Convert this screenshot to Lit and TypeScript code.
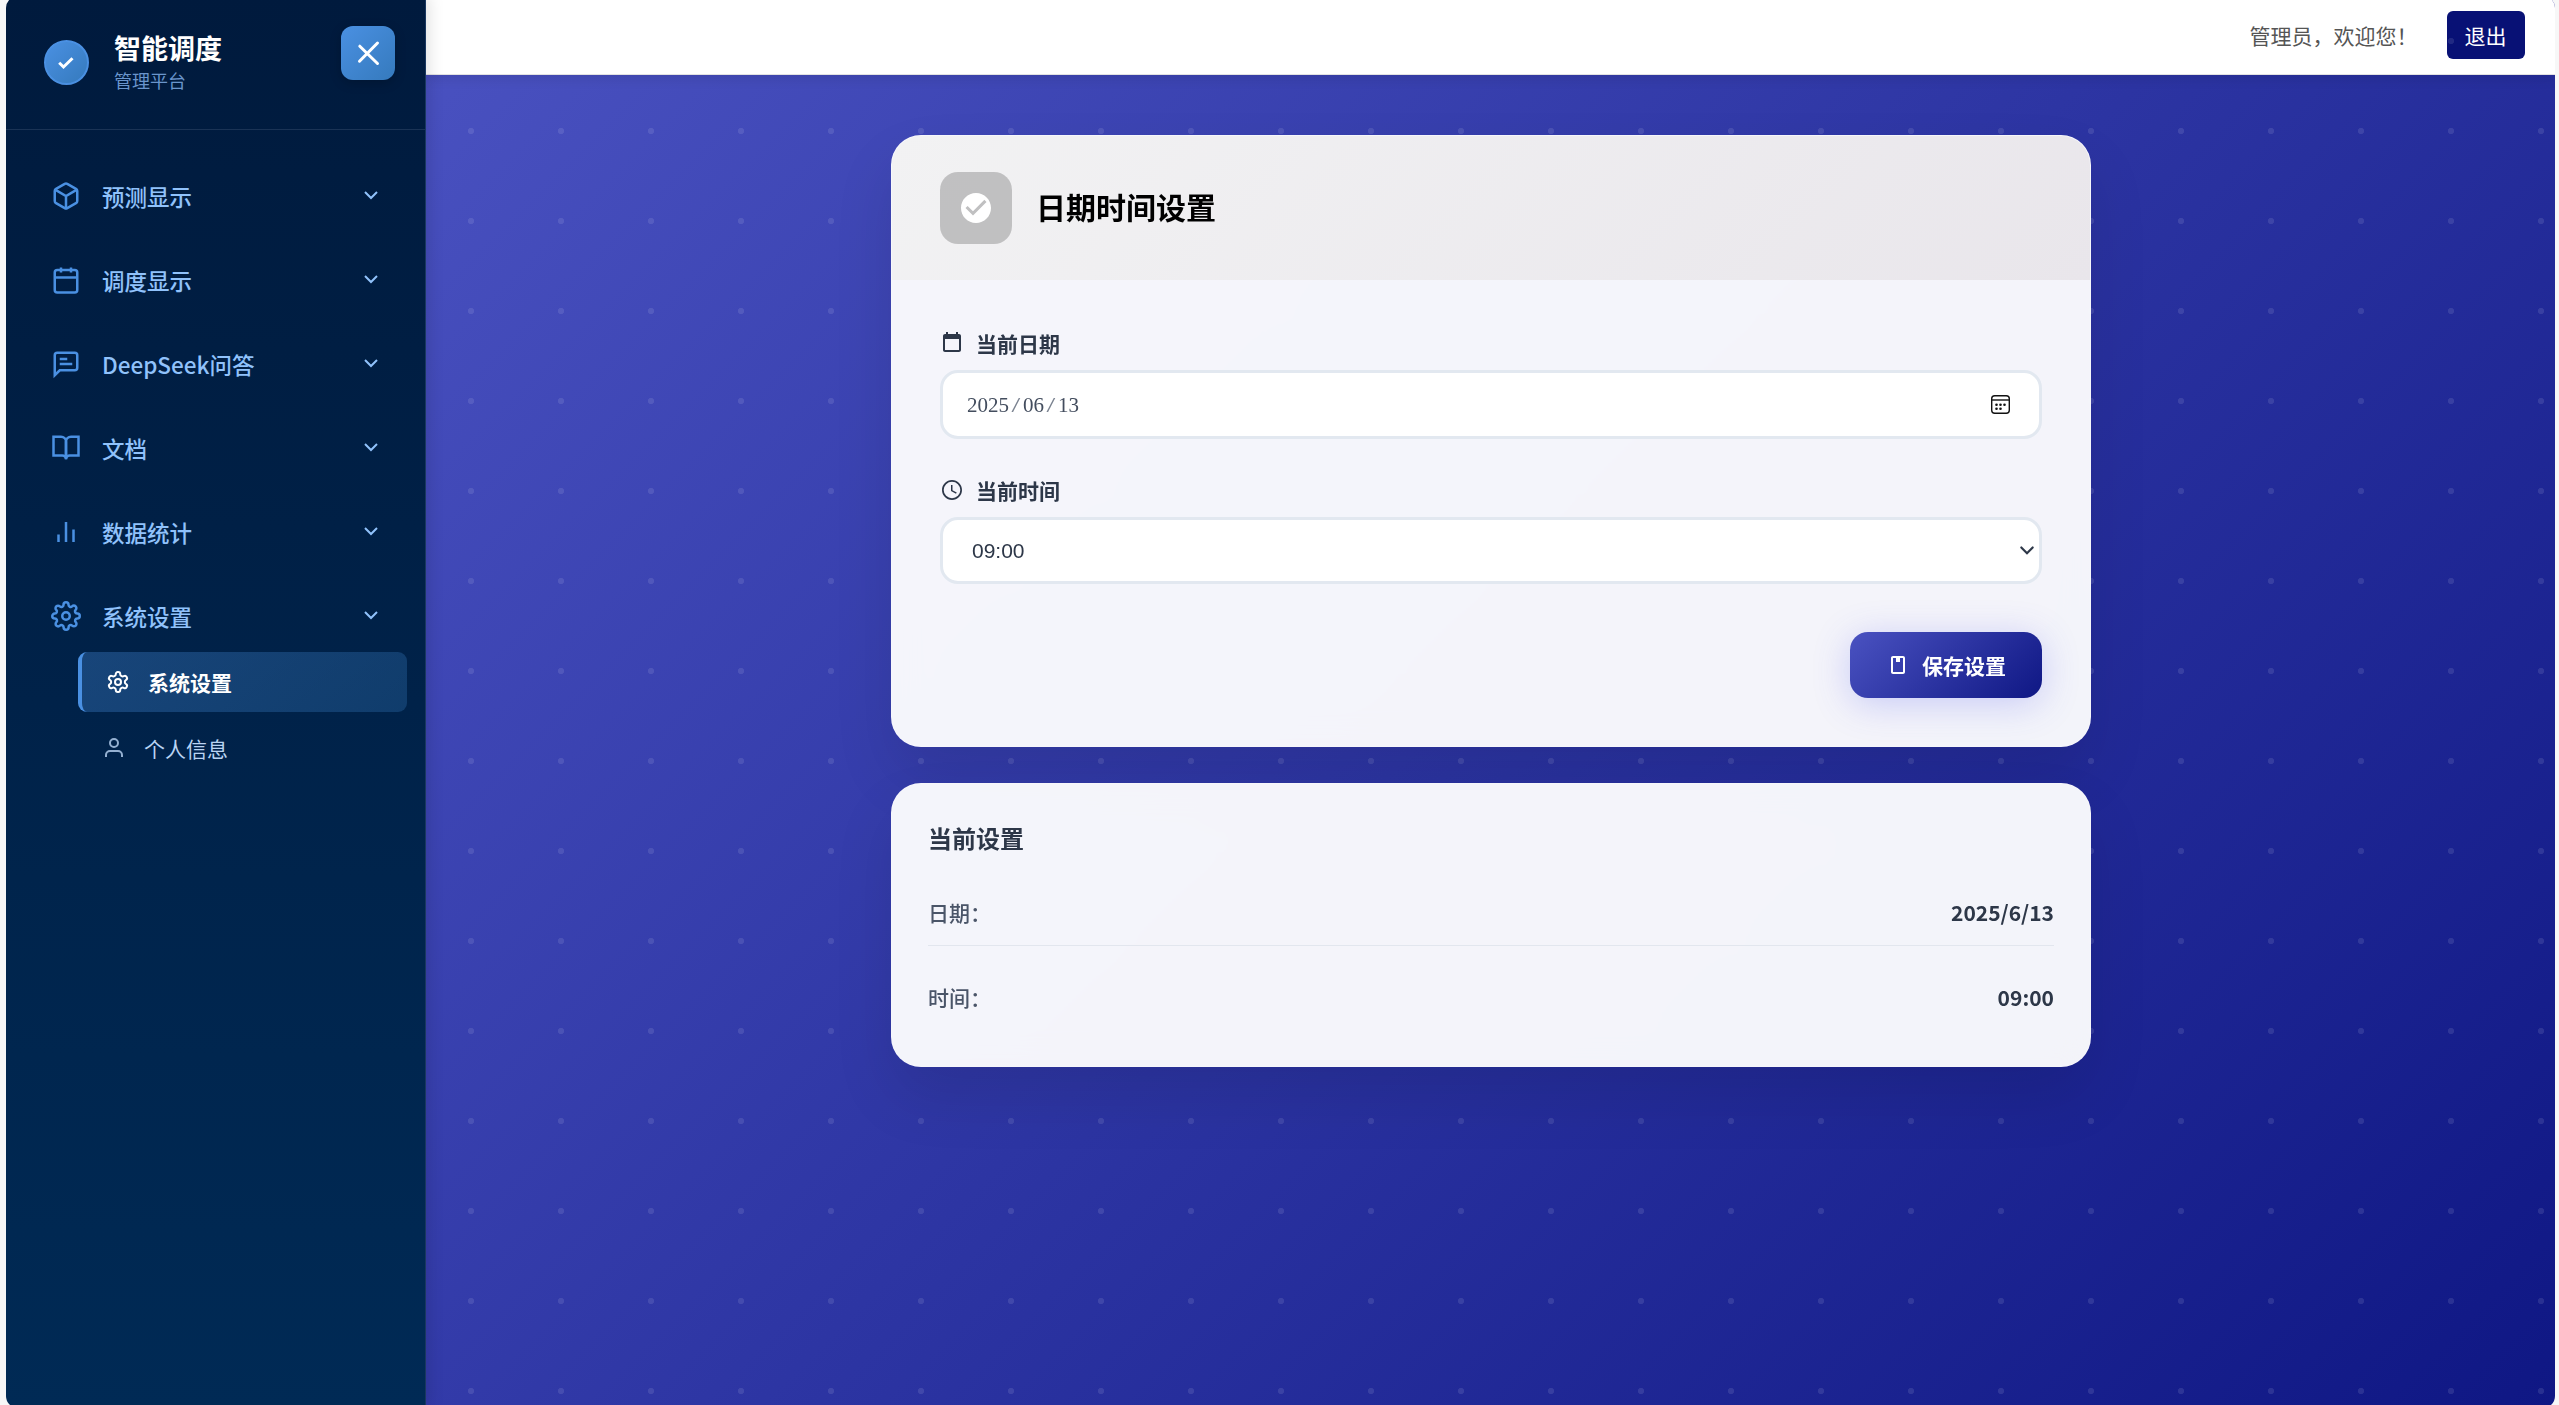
import { LitElement, html, css, svg } from "lit";
import { customElement } from "lit/decorators.js";

const icons = {
  box: svg`<path d="M21 16V8a2 2 0 0 0-1-1.73l-7-4a2 2 0 0 0-2 0l-7 4A2 2 0 0 0 3 8v8a2 2 0 0 0 1 1.73l7 4a2 2 0 0 0 2 0l7-4A2 2 0 0 0 21 16z"/><path d="M3.27 6.96L12 12.01l8.73-5.05M12 22.08V12"/>`,
  calendar: svg`<rect x="3" y="4" width="18" height="18" rx="2"/><path d="M16 2v4M8 2v4M3 10h18"/>`,
  chat: svg`<path d="M21 15a2 2 0 0 1-2 2H7l-4 4V5a2 2 0 0 1 2-2h14a2 2 0 0 1 2 2z"/><path d="M7 8h6M7 12h10"/>`,
  book: svg`<path d="M2 3h6a4 4 0 0 1 4 4v14a3 3 0 0 0-3-3H2z"/><path d="M22 3h-6a4 4 0 0 0-4 4v14a3 3 0 0 1 3-3h7z"/>`,
  chart: svg`<path d="M18 20V10M12 20V4M6 20v-6"/>`,
  settings: svg`<circle cx="12" cy="12" r="3"/><path d="M19.4 15a1.65 1.65 0 0 0 .33 1.82l.06.06a2 2 0 0 1 0 2.83 2 2 0 0 1-2.83 0l-.06-.06a1.65 1.65 0 0 0-1.82-.33 1.65 1.65 0 0 0-1 1.51V21a2 2 0 0 1-2 2 2 2 0 0 1-2-2v-.09A1.65 1.65 0 0 0 9 19.4a1.65 1.65 0 0 0-1.82.33l-.06.06a2 2 0 0 1-2.83 0 2 2 0 0 1 0-2.83l.06-.06a1.65 1.65 0 0 0 .33-1.82 1.65 1.65 0 0 0-1.51-1H3a2 2 0 0 1-2-2 2 2 0 0 1 2-2h.09A1.65 1.65 0 0 0 4.6 9a1.65 1.65 0 0 0-.33-1.82l-.06-.06a2 2 0 0 1 0-2.83 2 2 0 0 1 2.83 0l.06.06a1.65 1.65 0 0 0 1.82.33H9a1.65 1.65 0 0 0 1-1.51V3a2 2 0 0 1 2-2 2 2 0 0 1 2 2v.09a1.65 1.65 0 0 0 1 1.51 1.65 1.65 0 0 0 1.82-.33l.06-.06a2 2 0 0 1 2.83 0 2 2 0 0 1 0 2.83l-.06.06a1.65 1.65 0 0 0-.33 1.82V9a1.65 1.65 0 0 0 1.51 1H21a2 2 0 0 1 2 2 2 2 0 0 1-2 2h-.09a1.65 1.65 0 0 0-1.51 1z"/>`,
  cog: svg`<path d="M12.22 2h-.44a2 2 0 0 0-2 2v.18a2 2 0 0 1-1 1.73l-.43.25a2 2 0 0 1-2 0l-.15-.08a2 2 0 0 0-2.73.73l-.22.38a2 2 0 0 0 .73 2.73l.15.1a2 2 0 0 1 1 1.72v.51a2 2 0 0 1-1 1.74l-.15.09a2 2 0 0 0-.73 2.73l.22.38a2 2 0 0 0 2.73.73l.15-.08a2 2 0 0 1 2 0l.43.25a2 2 0 0 1 1 1.73V20a2 2 0 0 0 2 2h.44a2 2 0 0 0 2-2v-.18a2 2 0 0 1 1-1.73l.43-.25a2 2 0 0 1 2 0l.15.08a2 2 0 0 0 2.73-.73l.22-.39a2 2 0 0 0-.73-2.73l-.15-.08a2 2 0 0 1-1-1.74v-.5a2 2 0 0 1 1-1.74l.15-.09a2 2 0 0 0 .73-2.73l-.22-.38a2 2 0 0 0-2.73-.73l-.15.08a2 2 0 0 1-2 0l-.43-.25a2 2 0 0 1-1-1.73V4a2 2 0 0 0-2-2z"/><circle cx="12" cy="12" r="3"/>`,
  user: svg`<path d="M20 21v-2a4 4 0 0 0-4-4H8a4 4 0 0 0-4 4v2"/><circle cx="12" cy="7" r="4"/>`,
};

const menu = [
  { icon: icons.box, label: "预测显示" },
  { icon: icons.calendar, label: "调度显示" },
  { icon: icons.chat, label: "DeepSeek问答" },
  { icon: icons.book, label: "文档" },
  { icon: icons.chart, label: "数据统计" },
  { icon: icons.settings, label: "系统设置" },
];

@customElement("side-bar")
class SideBar extends LitElement {
  static styles = css`
    :host {
      display: flex;
      flex-direction: column;
      box-sizing: border-box;
      width: 420px;
      flex: none;
      border-right: 1px solid #1a3860;
      background: linear-gradient(180deg, #001a3d 0%, #002a55 100%);
      box-shadow: 3px 0 15px rgba(0, 0, 0, 0.12);
      position: relative;
      z-index: 3;
    }
    svg {
      display: block;
      flex: none;
      fill: none;
      stroke: currentColor;
      stroke-width: 2;
    }
    .head {
      display: flex;
      align-items: center;
      box-sizing: border-box;
      height: 134px;
      padding: 0 30px 0 37.5px;
      border-bottom: 1px solid #1a3355;
    }
    .logo {
      display: grid;
      place-items: center;
      box-sizing: border-box;
      width: 45px;
      height: 45px;
      border: 2px solid #4a90e2;
      border-radius: 50%;
      background: linear-gradient(135deg, #4a90e2, #357abd);
      color: #fff;
    }
    .logo svg,
    .close svg {
      stroke-width: 3;
    }
    .name {
      margin-left: 25.5px;
      flex: 1;
    }
    .name h1 {
      margin: -1px 0 0;
      font-size: 27px;
      line-height: 36px;
      font-weight: 700;
      color: #fff;
    }
    .name p {
      margin: 0;
      font-size: 18px;
      line-height: 28px;
      color: #6a95cc;
    }
    .close {
      display: grid;
      place-items: center;
      align-self: flex-start;
      margin-top: 30px;
      width: 54px;
      height: 54px;
      border-radius: 12px;
      background: linear-gradient(135deg, #4a90e2, #357abd);
      box-shadow: 0 3px 12px rgba(0, 0, 0, 0.2);
      color: #fff;
    }
    nav {
      padding: 30px 18px 0;
      display: flex;
      flex-direction: column;
      gap: 12px;
    }
    .item {
      display: flex;
      align-items: center;
      height: 72px;
      padding: 0 24px 0 27px;
      color: #90c2fb;
      font-size: 22.5px;
      font-weight: 500;
    }
    .item .ic {
      color: #4a90e2;
    }
    .item span {
      flex: 1;
      margin-left: 21px;
      padding-bottom: 1px;
    }
    .item .chev {
      margin-bottom: 2px;
    }
    .sub {
      display: flex;
      flex-direction: column;
      gap: 6px;
      padding: 0 18px 0 72px;
    }
    .entry {
      display: flex;
      align-items: center;
      gap: 18px;
      box-sizing: border-box;
      height: 60px;
      padding-left: 24px;
      border-radius: 9px;
      font-size: 21px;
      color: #b9d4f3;
    }
    .entry svg {
      opacity: 0.8;
    }
    .active {
      border-left: 4px solid #4a90e2;
      background: linear-gradient(135deg, rgba(74, 144, 226, 0.32), rgba(53, 122, 189, 0.3));
      color: #fff;
      font-weight: 700;
    }
    .active svg {
      opacity: 1;
    }
  `;
  render() {
    return html`
      <div class="head">
        <div class="logo">
          <svg width="24" height="24" viewBox="0 0 24 24"><path d="M5.2 11.8l4.3 4.2 9-8.8"/></svg>
        </div>
        <div class="name">
          <h1>智能调度</h1>
          <p>管理平台</p>
        </div>
        <div class="close">
          <svg width="54" height="54" viewBox="0 0 54 54" stroke-linecap="round"><path d="M18.8 20.2L36.500 37.500M36.500 17L18.500 35.200"/></svg>
        </div>
      </div>
      <nav>
        ${menu.map(
          (m) => html`<div class="item">
            <svg class="ic" width="30" height="30" viewBox="0 0 24 24">${m.icon}</svg>
            <span>${m.label}</span>
            <svg class="chev" width="24" height="24" viewBox="0 0 24 24"><path d="M6 9l6 6 6-6"/></svg>
          </div>`,
        )}
      </nav>
      <div class="sub">
        <div class="entry active">
          <svg width="24" height="24" viewBox="0 0 24 24">${icons.cog}</svg>
          <span>系统设置</span>
        </div>
        <div class="entry">
          <svg width="24" height="24" viewBox="0 0 24 24">${icons.user}</svg>
          <span>个人信息</span>
        </div>
      </div>
    `;
  }
}

@customElement("settings-cards")
class SettingsCards extends LitElement {
  static styles = css`
    :host {
      display: flex;
      flex-direction: column;
      gap: 36px;
      width: 1200px;
      margin-left: 1.5px;
      position: relative;
      z-index: 2;
    }
    svg {
      display: block;
      flex: none;
      fill: currentColor;
    }
    .card {
      box-sizing: border-box;
      border: 1px solid rgba(255, 255, 255, 0.2);
      border-radius: 30px;
      background: rgba(255, 255, 255, 0.95);
      backdrop-filter: blur(15px);
      box-shadow: 0 30px 60px rgba(0, 0, 0, 0.1);
      overflow: hidden;
    }
    .top {
      display: flex;
      align-items: center;
      gap: 24px;
      height: 72px;
      padding: 36px 48px;
      background: linear-gradient(135deg, #f2f2f3, #e9e6eb);
    }
    .badge {
      display: grid;
      place-items: center;
      width: 72px;
      height: 72px;
      border-radius: 18px;
      background: rgba(0, 0, 0, 0.2);
      color: #fff;
    }
    h2 {
      margin: 0 0 5px;
      font-size: 30px;
      font-weight: 700;
      color: #000;
    }
    .body {
      display: flex;
      flex-direction: column;
      padding: 48px;
      color: #2d3748;
    }
    .label {
      display: flex;
      align-items: center;
      gap: 12px;
      height: 30px;
      margin-bottom: 12px;
      font-size: 21px;
      font-weight: 700;
    }
    .field {
      display: flex;
      align-items: center;
      justify-content: space-between;
      box-sizing: border-box;
      border: 3px solid #e2e8f0;
      border-radius: 18px;
      background: #fff;
      font-size: 21px;
    }
    .date {
      height: 69px;
      padding: 0 26px 0 24px;
      margin-bottom: 36px;
      font-family: "Liberation Serif", "Noto Sans CJK SC", serif;
    }
    .parts {
      display: flex;
      padding-top: 1px;
      color: #434d5e;
    }
    .sep {
      width: 14px;
      text-align: center;
      transform: scaleX(1.5);
      color: #7a8290;
    }
    .date svg {
      color: #111;
    }
    .time {
      height: 67px;
      padding: 0 3px 0 29px;
      margin-bottom: 48px;
      font-family: "Liberation Sans", "Noto Sans CJK SC", sans-serif;
    }
    .save {
      align-self: flex-end;
      display: flex;
      align-items: center;
      gap: 12px;
      height: 66px;
      padding: 0 36px;
      border-radius: 18px;
      background: linear-gradient(135deg, #4a52c1, #0f1784);
      box-shadow: 0 6px 36px rgba(76, 81, 240, 0.25);
      color: #fff;
      font-size: 21px;
      font-weight: 700;
    }
    .current {
      padding: 36px;
    }
    h3 {
      margin: 0 0 24px;
      font-size: 24px;
      line-height: 35px;
      font-weight: 700;
      color: #2d3748;
    }
    .row {
      display: flex;
      justify-content: space-between;
      padding: 18px 0;
      font-size: 21px;
      line-height: 30px;
      font-weight: 500;
      color: #4a5568;
    }
    .row + .row {
      margin-top: 18px;
    }
    .ruled {
      border-bottom: 1px solid #e2e6ee;
    }
    .row b {
      font-weight: 700;
      color: #2d3748;
    }
  `;
  render() {
    return html`
      <section class="card">
        <div class="top">
          <div class="badge">
            <svg width="36" height="36" viewBox="0 0 24 24"><path d="M12 2C6.48 2 2 6.48 2 12s4.48 10 10 10 10-4.48 10-10S17.52 2 12 2zm-2 15l-5-5 1.41-1.41L10 14.17l7.59-7.59L19 8l-9 9z"/></svg>
          </div>
          <h2>日期时间设置</h2>
        </div>
        <div class="body">
          <div class="label">
            <svg width="24" height="24" viewBox="0 0 24 24"><path d="M19 3h-1V1h-2v2H8V1H6v2H5c-1.11 0-1.99.9-1.99 2L3 19c0 1.1.89 2 2 2h14c1.1 0 2-.9 2-2V5c0-1.1-.9-2-2-2zm0 16H5V8h14v11z"/></svg>
            <span>当前日期</span>
          </div>
          <div class="field date">
            <div class="parts"><span>2025</span><span class="sep">/</span><span>06</span><span class="sep">/</span><span>13</span></div>
            <svg width="24" height="24" viewBox="0 0 24 24">
              <rect x="2.7" y="2.7" width="17.6" height="17.6" rx="3" fill="none" stroke="currentColor" stroke-width="1.4"/>
              <path d="M3 7h17" stroke="currentColor" stroke-width="1.4"/>
              <circle cx="7.5" cy="11.7" r="1.3"/><circle cx="11.5" cy="11.7" r="1.3"/><circle cx="15.5" cy="11.7" r="1.3"/>
              <circle cx="7.5" cy="15.7" r="1.3"/><circle cx="11.5" cy="15.7" r="1.3"/>
            </svg>
          </div>
          <div class="label">
            <svg width="24" height="24" viewBox="0 0 24 24"><path d="M11.99 2C6.47 2 2 6.48 2 12s4.47 10 9.99 10C17.52 22 22 17.52 22 12S17.52 2 11.99 2zM12 20.3a8.3 8.3 0 1 1 0-16.600 8.300 8.300 0 0 1 0 16.600z"/><path d="M12.500 7H11v6l5 2.700.75-1.230-4.250-2.300z"/></svg>
            <span>当前时间</span>
          </div>
          <div class="field time">
            <span>09:00</span>
            <svg width="18" height="18" viewBox="0 0 18 18"><path d="M3.300 5.500l5.700 5.700 5.700-5.700" fill="none" stroke="currentColor" stroke-width="2.200" stroke-linecap="round"/></svg>
          </div>
          <div class="save">
            <svg width="24" height="24" viewBox="0 0 24 24"><path d="M17 3H7c-1.1 0-2 .9-2 2v14c0 1.1.9 2 2 2h10c1.1 0 2-.9 2-2V5c0-1.1-.9-2-2-2zm0 16H7V5h3v4h4V5h3v14z"/></svg>
            <span>保存设置</span>
          </div>
        </div>
      </section>
      <section class="card current">
        <h3>当前设置</h3>
        <div class="row ruled"><span>日期：</span><b>2025/6/13</b></div>
        <div class="row"><span>时间：</span><b>09:00</b></div>
      </section>
    `;
  }
}

@customElement("app-root")
class AppRoot extends LitElement {
  static styles = css`
    :host {
      display: flow-root;
      height: 1405px;
      overflow: hidden;
      background: #f7f7f7;
      font-family: "Noto Sans CJK SC", sans-serif;
    }
    .frame {
      display: flex;
      width: 2548.5px;
      height: 1412px;
      margin: -4px 0 0 6px;
      border-radius: 12px;
      overflow: hidden;
    }
    main {
      flex: 1;
      position: relative;
      display: flex;
      flex-direction: column;
      align-items: center;
      background: linear-gradient(135deg, #4a52c1, #0f1784);
    }
    .dots {
      position: absolute;
      inset: 0;
      z-index: 1;
      pointer-events: none;
      background-image: radial-gradient(circle at 45px 45px, rgba(255, 255, 255, 0.1) 2.8px, transparent 3.4px);
      background-size: 90px 90px;
    }
    header {
      align-self: stretch;
      display: flex;
      align-items: center;
      justify-content: flex-end;
      gap: 29px;
      box-sizing: border-box;
      height: 79px;
      margin-bottom: 60px;
      padding-right: 30px;
      border-bottom: 1px solid #e2e2e2;
      background: #fff;
      box-shadow: 0 3px 12px rgba(0, 0, 0, 0.1);
      font-size: 21px;
      color: #555;
    }
    header span {
      margin-bottom: 1px;
    }
    .logout {
      display: grid;
      place-items: center;
      width: 78px;
      height: 48px;
      border-radius: 6px;
      background: #081175;
      color: #fff;
    }
  `;
  render() {
    return html`
      <div class="frame">
        <side-bar></side-bar>
        <main>
          <div class="dots"></div>
          <header>
            <span>管理员，欢迎您！</span>
            <div class="logout">退出</div>
          </header>
          <settings-cards></settings-cards>
        </main>
      </div>
    `;
  }
}
